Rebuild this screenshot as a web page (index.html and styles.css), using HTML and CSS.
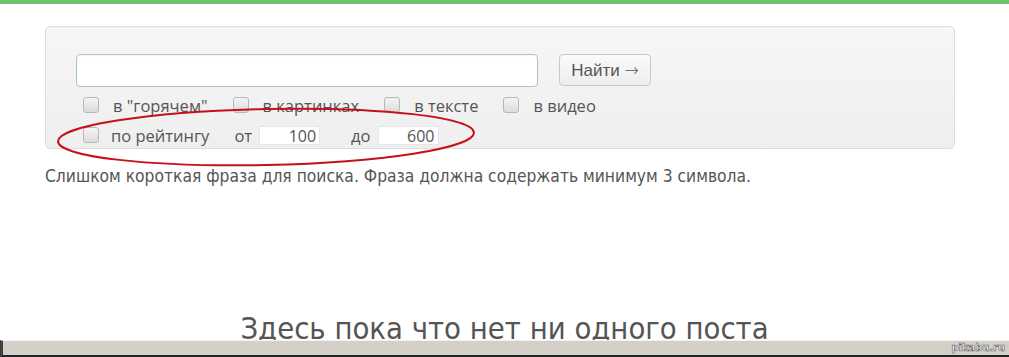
FILE: index.html
```html
<!DOCTYPE html>
<html lang="ru">
<head>
  <meta charset="UTF-8">
  <title>Поиск</title>
  <link rel="stylesheet" href="styles.css">
</head>
<body>
  <div class="topbar"></div>
  <div class="page">
    <form class="search">
      <div class="query">
        <input type="text" class="query-input">
        <button type="button" class="find">Найти <span class="arrow">&rarr;</span></button>
      </div>
      <div class="opts">
        <label class="opt"><span class="box"></span>в "горячем"</label>
        <label class="opt"><span class="box"></span>в картинках</label>
        <label class="opt"><span class="box"></span>в тексте</label>
        <label class="opt"><span class="box"></span>в видео</label>
      </div>
      <div class="opts rating">
        <label class="opt"><span class="box"></span>по рейтингу</label>
        <span class="range">от <span class="num">100</span></span>
        <span class="range">до <span class="num">600</span></span>
      </div>
      <svg class="circle" width="440" height="70" viewBox="0 0 440 70">
        <ellipse cx="220" cy="35" rx="208" ry="28" transform="rotate(-1.2 220 35)" fill="none" stroke="#c8101c" stroke-width="2"/>
      </svg>
    </form>
    <p class="error">Слишком короткая фраза для поиска. Фраза должна содержать минимум 3 символа.</p>
  </div>
  <h2 class="empty">Здесь пока что нет ни одного поста</h2>
  <div class="statusbar"><span class="mark">pikabu.ru</span></div>
</body>
</html>
```

FILE: styles.css
```css
body {
  margin: 0;
  height: 357px;
  overflow: hidden;
  font-family: "Open Sans", sans-serif;
  color: #555;
  background: #fff;
}
.topbar {
  height: 4px;
  background: #6cc36a;
}
.page {
  padding: 22px 54px 0 45px;
}
.search {
  position: relative;
  height: 123px;
  box-sizing: border-box;
  padding: 27px 0 0 30px;
  border: 1px solid #dcdcdc;
  border-radius: 5px;
  background: linear-gradient(#f6f6f6, #efefef);
}
.query {
  display: flex;
  gap: 21px;
}
.query-input {
  width: 462px;
  height: 33px;
  box-sizing: border-box;
  border: 1px solid #a9c4d6;
  border-radius: 4px;
  background: #fff;
  box-shadow: inset 0 1px 2px rgba(0,0,0,0.05);
}
.find {
  width: 92px;
  height: 32px;
  padding: 0;
  font-family: "Liberation Sans", Arial, sans-serif;
  font-size: 17px;
  color: #555;
  border: 1px solid #c8c8c8;
  border-radius: 4px;
  background: linear-gradient(#fafafa, #eeeeee);
}
.arrow {
  font-family: "DejaVu Sans", sans-serif;
  font-size: 17px;
  font-weight: 300;
}
.opts {
  display: flex;
  align-items: center;
  margin: 8px 0 0 7px;
  font-size: 16.5px;
  height: 20px;
}
.opt {
  display: flex;
  align-items: center;
  margin-right: 25px;
}
.box {
  width: 14px;
  height: 14px;
  margin-right: 14px;
  border: 1px solid #b8b8b8;
  border-radius: 3px;
  background: linear-gradient(#f4f4f4, #dcdcdc);
}
.rating {
  margin-top: 10px;
}
.rating .opt {
  margin-right: 25px;
}
.rating .box {
  margin-right: 12px;
}
.range {
  display: flex;
  align-items: center;
  margin-right: 31px;
}
.num {
  display: inline-block;
  width: 61px;
  height: 19px;
  margin-left: 7px;
  padding-right: 3px;
  box-sizing: border-box;
  text-align: right;
  line-height: 19px;
  font-size: 16px;
  border: 1px solid #e6e6e6;
  background: #fff;
}
.circle {
  position: absolute;
  left: 0;
  top: 75px;
}
.error {
  margin: 17px 0 0;
  font-family: "DejaVu Sans Condensed", "DejaVu Sans", sans-serif;
  font-size: 17.3px;
  color: #555;
}
.empty {
  margin: 125px 0 0;
  text-align: center;
  font-family: "DejaVu Sans Condensed", "DejaVu Sans", sans-serif;
  font-weight: normal;
  font-size: 30.7px;
  color: #555;
  height: 36px;
  line-height: 36px;
}
.statusbar {
  position: absolute;
  left: 0;
  right: 0;
  top: 340px;
  height: 14px;
  border-top: 1px solid #f4f2ee;
  border-left: 3px solid #404040;
  border-bottom: 3px solid #222;
  background: #d4d0c8;
  text-align: right;
  font-family: "DejaVu Sans Condensed", sans-serif;
  font-size: 11px;
  line-height: 14px;
  color: #fff;
}
.mark {
  margin-right: 4px;
  -webkit-text-stroke: 0.6px #555;
  font-weight: bold;
}
```
